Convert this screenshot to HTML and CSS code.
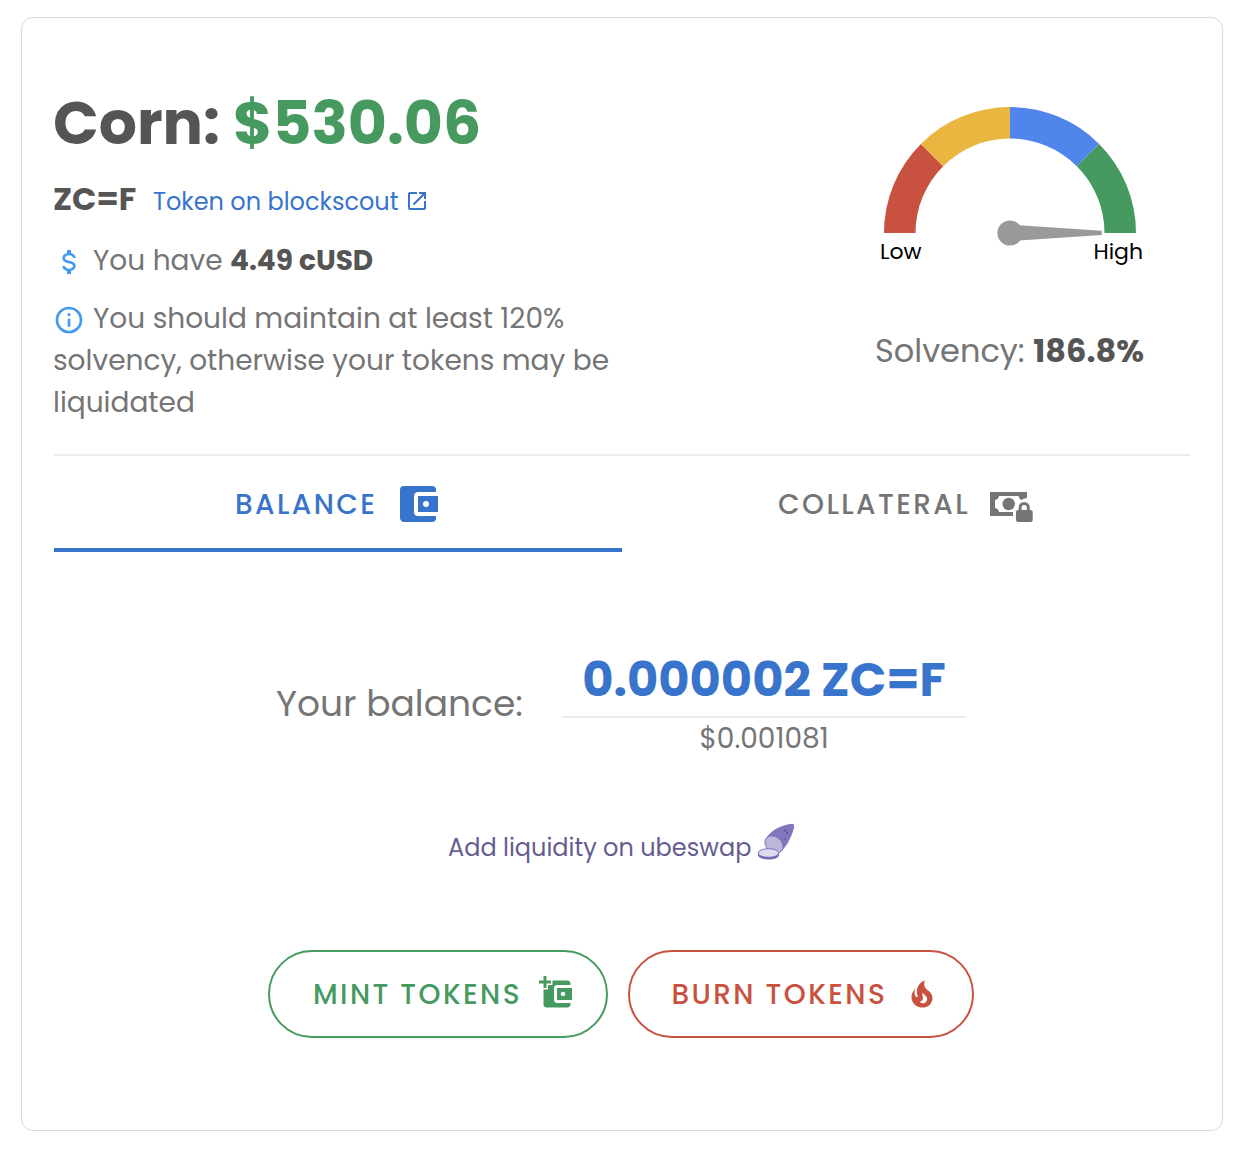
FILE: index.html
```html
<!DOCTYPE html>
<html lang="en">
<head>
<meta charset="utf-8">
<title>Corn</title>
<link rel="stylesheet" href="styles.css">
</head>
<body>
<main class="card">
  <header class="summary">
    <section class="details">
      <h1 class="title"><span class="name">Corn:</span><span class="price">$530.06</span></h1>
      <div class="symbol-row">
        <strong class="symbol">ZC=F</strong>
        <a class="link"><span>Token on blockscout</span><svg class="icon-open" viewBox="0 0 24 24"><path d="M14,3V5H17.59L7.76,14.83L9.17,16.24L19,6.41V10H21V3M19,19H5V5H12V3H5C3.89,3 3,3.9 3,5V19A2,2 0 0,0 5,21H19A2,2 0 0,0 21,19V12H19V19Z"/></svg></a>
      </div>
      <div class="holding">
        <svg class="icon-info" viewBox="0 0 24 24"><path d="M7,15H9C9,16.08 10.37,17 12,17C13.63,17 15,16.08 15,15C15,13.9 13.96,13.5 11.76,12.97C9.64,12.44 7,11.78 7,9C7,7.21 8.47,5.69 10.5,5.18V3H13.5V5.18C15.53,5.69 17,7.21 17,9H15C15,7.92 13.63,7 12,7C10.37,7 9,7.92 9,9C9,10.1 10.04,10.5 12.24,11.03C14.36,11.56 17,12.22 17,15C17,16.79 15.53,18.31 13.5,18.82V21H10.5V18.82C8.47,18.31 7,16.79 7,15Z"/></svg>
        <span class="you-have">You have</span><strong class="amount">4.49 cUSD</strong>
      </div>
      <div class="notice">
        <div class="notice-line"><svg class="icon-info" viewBox="0 0 24 24"><path d="M11,9H13V7H11M12,20C7.59,20 4,16.41 4,12C4,7.59 7.59,4 12,4C16.41,4 20,7.59 20,12C20,16.41 16.41,20 12,20M12,2A10,10 0 0,0 2,12A10,10 0 0,0 12,22A10,10 0 0,0 22,12A10,10 0 0,0 12,2M11,17H13V11H11V17Z"/></svg><span>You should maintain at least 120%</span></div>
        <div class="notice-line">solvency, otherwise your tokens may be</div>
        <div class="notice-line">liquidated</div>
      </div>
    </section>
    <section class="solvency">
      <svg class="gauge" viewBox="0 0 252 140">
        <path fill="#c85140" d="M0 126A126 126 0 0 1 36.9 36.9L59.2 59.2A94.5 94.5 0 0 0 31.5 126Z"/>
        <path fill="#e9b63f" d="M36.9 36.9A126 126 0 0 1 126 0V31.5A94.5 94.5 0 0 0 59.2 59.2Z"/>
        <path fill="#5085ec" d="M126 0A126 126 0 0 1 215.1 36.9L192.8 59.2A94.5 94.5 0 0 0 126 31.5Z"/>
        <path fill="#479a5f" d="M215.1 36.9A126 126 0 0 1 252 126H220.5A94.5 94.5 0 0 0 192.8 59.2Z"/>
        <g fill="#999"><circle cx="126" cy="126" r="12.6"/><path d="M135 118.2L217.8 123.7V128L135 133.6Z"/></g>
      </svg>
      <div class="scale"><span>Low</span><span>High</span></div>
      <div class="ratio"><span>Solvency:</span><strong>186.8%</strong></div>
    </section>
  </header>
  <nav class="tabs">
    <div class="tab active"><span class="tab-label">BALANCE</span><svg class="icon-tab" viewBox="0 0 24 24"><path d="M21,18V19A2,2 0 0,1 19,21H5C3.89,21 3,20.1 3,19V5A2,2 0 0,1 5,3H19A2,2 0 0,1 21,5V6H12C10.89,6 10,6.9 10,8V16A2,2 0 0,0 12,18M12,16H22V8H12M16,13.5A1.5,1.5 0 0,1 14.5,12A1.5,1.5 0 0,1 16,10.5A1.5,1.5 0 0,1 17.5,12A1.5,1.5 0 0,1 16,13.5Z"/></svg></div>
    <div class="tab"><span class="tab-label">COLLATERAL</span><svg class="icon-cash" viewBox="0 0 44 32"><path fill-rule="evenodd" d="M0 1H37V7.4C34.6 7.2 33 8 31.8 9Q29 8 28.5 5H9Q8.5 8.5 5 9V17Q8.5 17.5 9 21H23V25H0Z"/><circle cx="18.7" cy="13" r="6.2"/><path fill-rule="evenodd" d="M28.6 19V16.5A5.6 5.6 0 0 1 39.8 16.5V19H40.7A2 2 0 0 1 42.7 21V29A2 2 0 0 1 40.7 31H28A2 2 0 0 1 26 29V21A2 2 0 0 1 28 19ZM31.6 19H36.8V16.5A2.6 2.6 0 0 0 31.6 16.5Z"/></svg></div>
  </nav>
  <section class="balance">
    <span class="balance-label">Your balance:</span>
    <div class="balance-values"><strong class="token-amount">0.000002 ZC=F</strong><span class="usd">$0.001081</span></div>
  </section>
  <a class="liquidity"><span>Add liquidity on ubeswap</span>
    <svg class="yam" viewBox="0 0 38 38"><path fill="#8277bd" d="M8.500 16C15 6 25 2 35.500 .8Q37.500 1 37 5C34 16 28 26 22 30Z"/><ellipse cx="17" cy="21.5" rx="10" ry="7.7" transform="rotate(40 17 21.5)" fill="#beb5dc" stroke="#7569b0" stroke-width=".8"/><path d="M27 7L31 11M27.5 6L29 8M27 15L28.5 17M30 9L31 12" stroke="#51488a" stroke-width=".8"/><path fill="#7569b5" d="M1 29.5V32C1 38 22 38 22 32V29.5Z"/><ellipse cx="11.5" cy="30" rx="10.3" ry="4.3" fill="#ded9ec" stroke="#7569b5" stroke-width=".9"/></svg></a>
  <div class="actions">
    <button class="btn mint"><span>MINT TOKENS</span><svg class="icon-btn" viewBox="0 0 24 24"><path d="M3 0V3H0V5H3V8H5V5H8V3H5V0H3M9 3V6H6V9H3V19C3 20.1 3.89 21 5 21H19C20.11 21 21 20.11 21 19V18H12C10.9 18 10 17.11 10 16V8C10 6.9 10.89 6 12 6H21V5C21 3.9 20.11 3 19 3H9M12 8V16H22V8H12M16 10.5C16.83 10.5 17.5 11.17 17.5 12C17.5 12.83 16.83 13.5 16 13.5C15.17 13.5 14.5 12.83 14.5 12C14.5 11.17 15.17 10.5 16 10.5Z"/></svg></button>
    <button class="btn burn"><span>BURN TOKENS</span><svg class="icon-btn" viewBox="0 0 24 24"><path d="M17.66 11.2C17.43 10.9 17.15 10.64 16.89 10.38C16.22 9.78 15.46 9.35 14.82 8.72C13.33 7.26 13 4.85 13.95 3C13 3.23 12.17 3.75 11.46 4.32C8.87 6.4 7.85 10.07 9.07 13.22C9.11 13.32 9.15 13.42 9.15 13.55C9.15 13.77 9 13.97 8.8 14.05C8.57 14.15 8.33 14.09 8.14 13.93C8.08 13.88 8.04 13.83 8 13.76C6.87 12.33 6.69 10.28 7.45 8.64C5.78 10 4.87 12.3 5 14.47C5.06 14.97 5.12 15.47 5.29 15.97C5.43 16.57 5.7 17.17 6 17.7C7.08 19.43 8.95 20.67 10.96 20.92C13.1 21.19 15.39 20.8 17.03 19.32C18.86 17.66 19.5 15 18.56 12.72L18.43 12.46C18.22 12 17.66 11.2 17.66 11.2M14.5 17.5C14.22 17.74 13.76 18 13.4 18.1C12.28 18.5 11.16 17.94 10.5 17.28C11.69 17 12.4 16.12 12.61 15.23C12.78 14.43 12.46 13.77 12.33 13C12.21 12.26 12.23 11.63 12.5 10.94C12.69 11.32 12.89 11.7 13.13 12C13.9 13 15.11 13.44 15.37 14.8C15.41 14.94 15.43 15.08 15.43 15.23C15.46 16.05 15.1 16.95 14.5 17.5Z"/></svg></button>
  </div>
</main>
</body>
</html>
```
FILE: styles.css
```css
* { box-sizing: border-box; }
body { margin: 0; background: #fff; font-family: Poppins, Inter, sans-serif; color: #757575; }
svg { display: block; flex: none; fill: currentColor; }
span, strong { white-space: nowrap; }
strong { font-weight: 700; color: #555; }
.card { width: 1202px; height: 1114px; margin: 17px 0 0 21px; padding: 69px 32px 0; border: 1px solid #d9d9d9; border-radius: 12px; }
.summary { display: flex; justify-content: space-between; height: 369px; border-bottom: 2px solid #ececec; }
.details { width: 640px; }
.title { display: flex; margin: 0 0 0 -1px; height: 71px; line-height: 73px; font-size: 60px; font-weight: 700; color: #555; }
.name { width: 180px; }
.price { color: #479a5f; }
.symbol-row { display: flex; height: 82px; line-height: 81px; }
.symbol { width: 100px; margin-left: -1px; font-size: 32px; }
.link { display: flex; align-items: center; gap: 7px; color: #3874cb; font-size: 24px; padding-top: 5px; }
.icon-open { width: 24px; height: 24px; margin-top: -2px; }
.holding { display: flex; align-items: center; height: 42px; font-size: 28px; }
.icon-info { width: 32px; height: 32px; margin: 2px 8px 0 -1px; color: #4299ee; }
.you-have { width: 137px; }
.notice { margin-left: -1px; padding-top: 16px; font-size: 28px; line-height: 42px; }
.notice .icon-info { margin-left: 0; }
.notice-line { display: flex; align-items: center; height: 42px; white-space: nowrap; }
.solvency { width: 320px; padding: 20px 46px 0 0; display: flex; flex-direction: column; align-items: flex-end; }
.gauge { width: 252px; height: 140px; margin-right: 8px; }
.scale { display: flex; justify-content: space-between; width: 263px; height: 30px; margin: -10px 1px 0 0; line-height: 30px; font-size: 22px; color: #000; }
.ratio { display: flex; justify-content: space-between; width: 269px; margin-top: 60px; line-height: 48px; font-size: 32px; }
.tabs { display: grid; grid-template-columns: 568px 568px; height: 96px; }
.tab { display: flex; align-items: center; gap: 20px; height: 96px; padding-left: 156px; font-size: 28px; font-weight: 500; letter-spacing: 2.4px; }
.tab-label { padding-top: 2px; }
.tab.active { gap: 16.5px; padding: 4px 0 0 181px; color: #3874cb; border-bottom: 4px solid #3874cb; }
.icon-tab { width: 48px; height: 48px; }
.icon-cash { width: 44px; height: 32px; margin-top: 5px; }
.balance { display: flex; margin: 98px 0 0 222px; height: 110px; }
.balance-label { width: 286px; font-size: 36px; line-height: 107px; }
.balance-values { width: 404px; text-align: center; }
.token-amount { display: block; height: 68px; line-height: 60px; border-bottom: 2px solid #ececec; color: #3874cb; font-size: 48px; }
.usd { display: block; line-height: 42px; font-size: 28px; }
.liquidity { display: flex; margin: 63px 0 0 394px; height: 38px; gap: 6px; color: #655d91; font-size: 24px; line-height: 50px; }
.yam { width: 38px; height: 38px; }
.actions { display: flex; gap: 20px; margin: 89px 0 0 214px; }
.btn { display: flex; align-items: center; justify-content: space-between; width: 340px; height: 88px; padding: 0 31px 0 43px; border: 2px solid; border-radius: 44px; background: none; font: 500 28px Poppins, Inter, sans-serif; letter-spacing: 2.4px; }
.btn span { padding-top: 2px; }
.icon-btn { width: 36px; height: 36px; }
.mint { color: #479a5f; }
.burn { width: 346px; padding: 0 32px 0 41.5px; color: #c85140; }
```
